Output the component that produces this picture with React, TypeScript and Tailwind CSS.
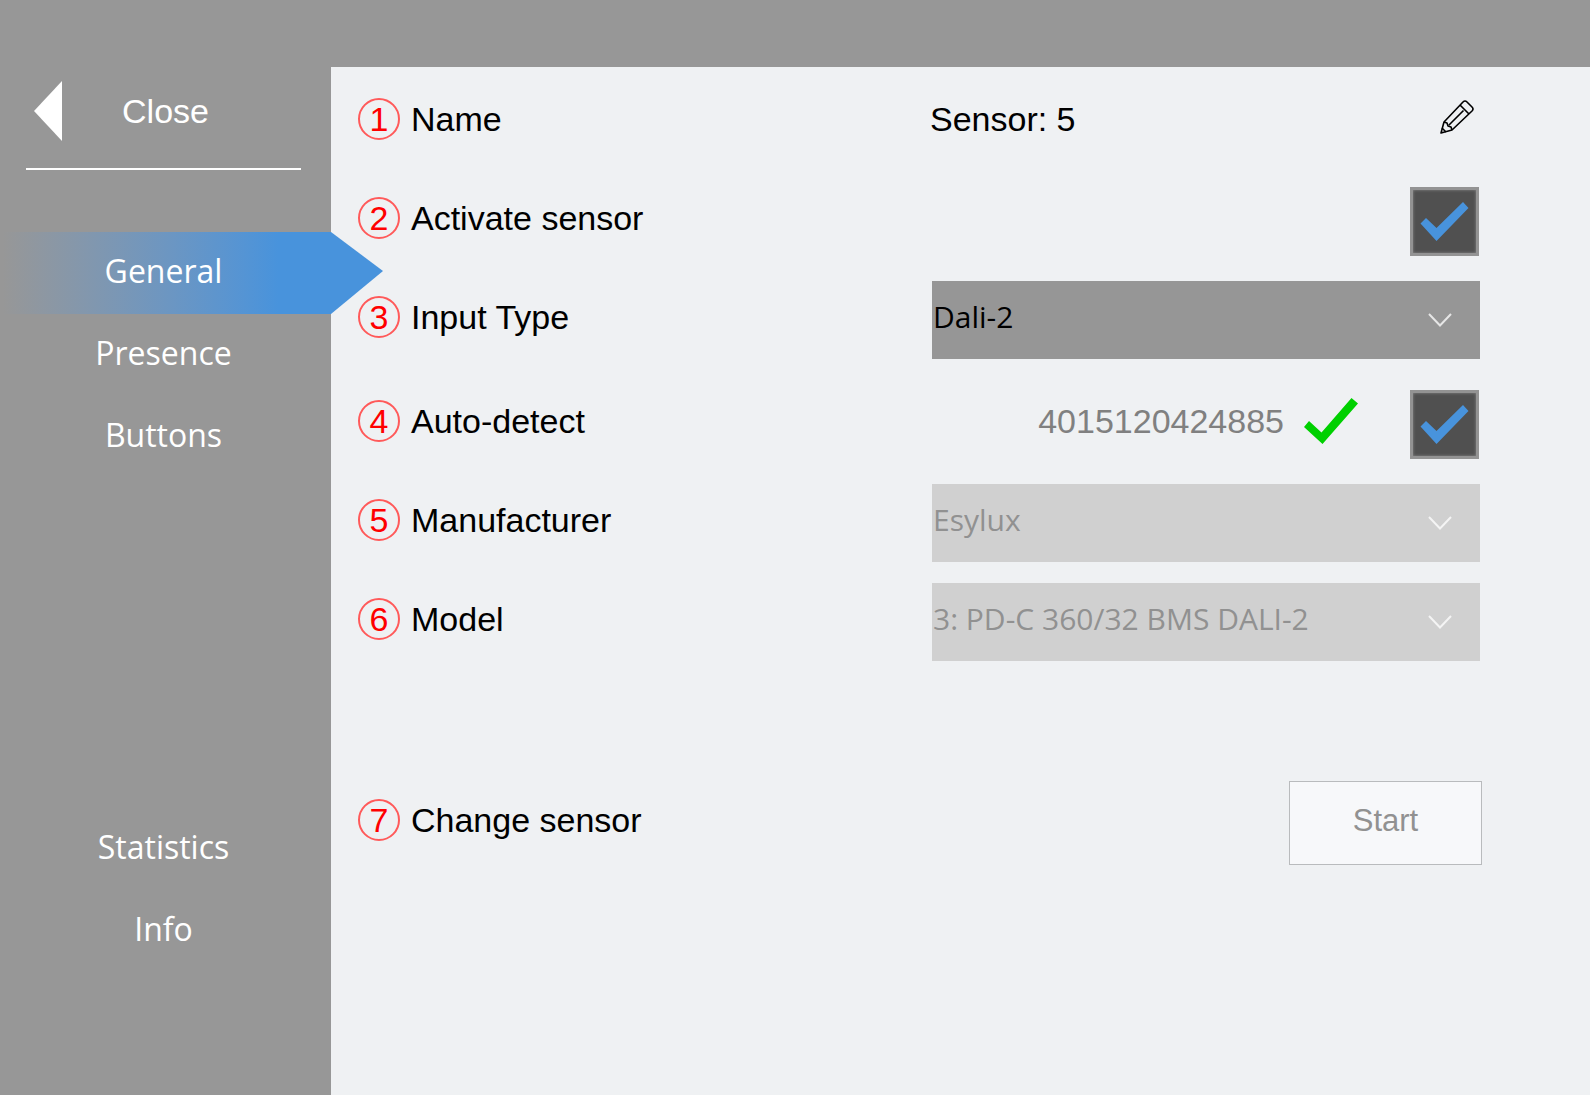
import { useState, type ReactNode } from 'react';
import clsx from 'clsx';

const mainNav = ['General', 'Presence', 'Buttons'];
const footerNav = ['Statistics', 'Info'];

type NavItemProps = {
  label: string;
  active: boolean;
  onSelect: () => void;
};

const NavItem = ({ label, active, onSelect }: NavItemProps) => (
  <a
    href="#"
    aria-current={active ? 'page' : undefined}
    onClick={(event) => {
      event.preventDefault();
      onSelect();
    }}
    className={clsx(
      'relative flex h-[82px] items-center justify-center pr-1 pb-1 text-[32px] leading-10',
      active && 'bg-linear-to-r from-[#979797] from-1% to-[#4893dc] to-84%'
    )}
  >
    {label}
    {/* Arrow tip that reaches over the content panel */}
    {active && (
      <svg
        viewBox="0 0 52 82"
        className="absolute top-0 left-full z-10 h-full w-[52px]"
        aria-hidden="true"
      >
        <path d="M0 0 52 39 0 82Z" fill="#4893dc" />
      </svg>
    )}
  </a>
);

type RowProps = {
  step: number;
  label: string;
  htmlFor?: string;
  children: ReactNode;
};

const Row = ({ step, label, htmlFor, children }: RowProps) => (
  <div className="flex h-[99px] items-center">
    <span className="flex size-[42px] shrink-0 items-center justify-center rounded-full border-2 border-[#ff5a5a] text-[#ff0000]">
      {step}
    </span>
    <label htmlFor={htmlFor} className="ml-[11px] flex-1">
      {label}
    </label>
    <div className="flex w-[550px] items-center justify-end">{children}</div>
  </div>
);

type CheckBoxProps = {
  id: string;
  checked: boolean;
  onChange: (checked: boolean) => void;
};

const CheckBox = ({ id, checked, onChange }: CheckBoxProps) => (
  <span className="relative mt-2 mr-px block size-[69px]">
    <input
      id={id}
      type="checkbox"
      checked={checked}
      onChange={(event) => onChange(event.target.checked)}
      className="block size-full appearance-none border-3 border-[#939393] bg-[#505050] shadow-[inset_0_0_3px_#8a8a8a]"
    />
    {checked && (
      <svg
        viewBox="0 0 69 69"
        className="pointer-events-none absolute inset-0"
        aria-hidden="true"
      >
        <path d="M10.500 36.500 16 31 26.500 41 53 15 58.500 21 26.500 54Z" fill="#4893dc" />
      </svg>
    )}
  </span>
);

type SelectProps = {
  id: string;
  options: string[];
  disabled?: boolean;
};

const Select = ({ id, options, disabled }: SelectProps) => (
  <span className="relative mt-1.5 block w-[548px]">
    <select
      id={id}
      disabled={disabled}
      className={clsx(
        "block h-[78px] w-full appearance-none pb-1.5 pl-px font-['Open_Sans',sans-serif] text-[30px] opacity-100",
        disabled ? 'bg-[#d0d0d0] text-[#919191]' : 'bg-[#969696] text-black'
      )}
    >
      {options.map((option) => (
        <option key={option}>{option}</option>
      ))}
    </select>
    <svg
      viewBox="0 0 24 14"
      className="pointer-events-none absolute top-8 right-7 h-3.5 w-6"
      fill="none"
      stroke={disabled ? '#f4f4f4' : '#e6e6e6'}
      strokeWidth="2"
      aria-hidden="true"
    >
      <path d="M1 1 12 12.500 23 1" />
    </svg>
  </span>
);

export default function App() {
  const [page, setPage] = useState('General');
  const [active, setActive] = useState(true);
  const [autoDetect, setAutoDetect] = useState(true);

  const renderNav = (label: string) => (
    <NavItem
      key={label}
      label={label}
      active={page === label}
      onSelect={() => setPage(label)}
    />
  );

  return (
    <div className="flex min-h-screen bg-[#979797] pt-[67px] font-['Liberation_Sans',Arial,sans-serif] text-[34px] leading-10 text-black">
      <aside className="w-[331px] shrink-0 text-white">
        <button
          type="button"
          className="relative flex h-[88px] w-full items-center justify-center"
        >
          <svg
            viewBox="0 0 28 60"
            className="absolute left-[34px] h-[60px] w-7"
            aria-hidden="true"
          >
            <path d="M28 0V60L0 30Z" fill="#fff" />
          </svg>
          Close
        </button>
        <hr className="mt-[13px] mr-[30px] ml-[26px] border-t-2 border-white" />

        <nav className="mt-[62px] font-['Open_Sans',sans-serif]">
          {mainNav.map(renderNav)}
          <div className="mt-[330px]">{footerNav.map(renderNav)}</div>
        </nav>
      </aside>

      <main className="flex-1 bg-[#eff1f3] pt-0.5 pr-[110px] pl-[27px]">
        <Row step={1} label="Name">
          <span className="flex-1">Sensor: 5</span>
          <button type="button" aria-label="Edit name" className="mr-1.5 mb-1">
            <svg
              viewBox="0 0 34 34"
              className="size-[34px]"
              fill="none"
              stroke="#000"
              strokeWidth="1.600"
              strokeLinejoin="round"
              aria-hidden="true"
            >
              <path d="M1 33 4 22 23 2Q25 0 27 2L32 7Q34 9 32 11L12 30Z" />
              <path d="M4 22 7 23 8 26 11 27 12 30M20 5 29 14M23.500 10.500 9 25M2 28 6 32" />
            </svg>
          </button>
        </Row>
        <Row step={2} label="Activate sensor" htmlFor="activate">
          <CheckBox id="activate" checked={active} onChange={setActive} />
        </Row>
        <Row step={3} label="Input Type" htmlFor="input-type">
          <Select id="input-type" options={['Dali-2']} />
        </Row>

        <div className="mt-[5px]">
          <Row step={4} label="Auto-detect" htmlFor="auto-detect">
            <span className="text-[#808080]">4015120424885</span>
            <svg
              viewBox="0 0 54 46"
              className="mr-[52px] ml-5 h-[46px] w-[54px]"
              aria-hidden="true"
            >
              <path d="M0 29 5 23 17.500 34.500 47.500 0 54 5.500 18.500 46Z" fill="#00d000" />
            </svg>
            <CheckBox id="auto-detect" checked={autoDetect} onChange={setAutoDetect} />
          </Row>
          <Row step={5} label="Manufacturer" htmlFor="manufacturer">
            <Select id="manufacturer" options={['Esylux']} disabled />
          </Row>
          <Row step={6} label="Model" htmlFor="model">
            <Select id="model" options={['3: PD-C 360/32 BMS DALI-2']} disabled />
          </Row>
        </div>

        <div className="mt-[102px]">
          <Row step={7} label="Change sensor" htmlFor="start">
            <button
              id="start"
              type="button"
              className="-mr-0.5 mt-1.5 h-[84px] w-[193px] border border-[#b9bbbd] bg-[#f7f8fa] pb-1 text-[31px] text-[#919191]"
            >
              Start
            </button>
          </Row>
        </div>
      </main>
    </div>
  );
}
